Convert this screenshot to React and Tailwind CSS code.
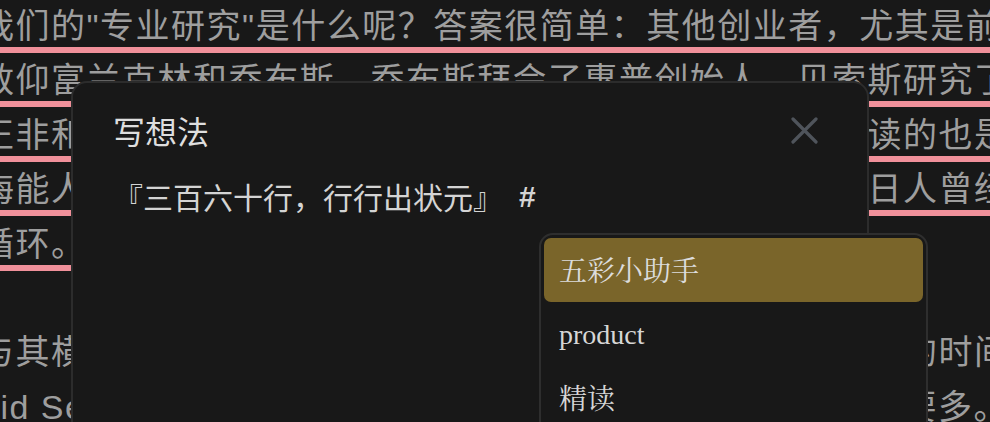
import React from "react";

const bgFont = { fontFamily: '"Liberation Sans", "Noto Sans CJK SC", sans-serif' };

function Line({ children, underline = true }) {
  return (
    <div className="h-[54.4px] pt-[6px] whitespace-nowrap">
      <span
        className={
          underline
            ? "inline-block align-top leading-[41px] border-b-[6px] border-[#f0909a]"
            : "inline-block align-top leading-[41px]"
        }
      >
        {children}
      </span>
    </div>
  );
}

export default function App() {
  return (
    <div className="relative w-[990px] h-[422px] overflow-hidden bg-[#181818]">
      <div
        className="-ml-[20px] w-[1100px] text-[34px] tracking-[1.5px] text-[#9e9e9e]"
        style={bgFont}
      >
        <Line>我们的"专业研究"是什么呢？答案很简单：其他创业者，尤其是前辈。</Line>
        <Line>敬仰富兰克林和乔布斯，乔布斯拜会了惠普创始人，贝索斯研究了任</Line>
        <Line>正非和雷军都曾多次公开表示，他们都反复研究、反复精读的也是前人。</Line>
        <Line>海能人异士的传记与访谈。这一代人学习上一代人，就像日人曾经学习。</Line>
        <Line>循环。</Line>
        <div className="h-[54.4px]" />
        <Line underline={false}>与其横向比较同行，不如纵向研究前辈：他们竟花了多少年的时间</Line>
        <div className="h-[54.4px] pt-[6px] whitespace-nowrap">
          <span className="inline-block align-top leading-[41px]">
            <span className="inline-block align-top w-[922.5px] overflow-hidden">
              aid Search 的广告投入，往往比我们想象中花在研究上的还
            </span>
            要多。
          </span>
        </div>
      </div>

      {/* Modal */}
      <div
        className="absolute left-[71px] top-[81px] w-[798px] h-[380px] rounded-[16px] border-2 border-[#2c2c2c] bg-[#181818] pl-[40px] pr-[49px] pt-[23px]"
        style={{ fontFamily: '"Noto Sans CJK SC", "Liberation Sans", sans-serif' }}
      >
        <div className="flex h-[48px] items-center justify-between">
          <div className="text-[32px] leading-[48px] text-[#dedede]">写想法</div>
          <svg width="27" height="27" viewBox="0 0 27 27" fill="none">
            <path d="M2 2 L25 25 M25 2 L2 25" stroke="#4f545b" strokeWidth="3.2" strokeLinecap="round" />
          </svg>
        </div>
        <div className="mt-[20px] flex items-center text-[30px] leading-[45px] text-[#d4d4d4] whitespace-nowrap">
          <span>『三百六十行，行行出状元』</span>
          <span className="ml-[16px] font-bold" style={{ fontFamily: '"Liberation Sans", sans-serif' }}>#</span>
        </div>
      </div>

      {/* Dropdown */}
      <div
        className="absolute left-[539px] top-[233px] w-[389px] h-[230px] rounded-[14px] border-2 border-[#2e2e2e] bg-[#181818] p-[3px] text-[28px] text-[#d6d6d6]"
        style={{ fontFamily: '"Liberation Serif", "Noto Serif CJK SC", "Noto Sans CJK SC", serif' }}
      >
        <div className="flex h-[64px] items-center rounded-[7px] bg-[#7a652a] pl-[15px] pt-[4px] text-[#dcdcdc]">
          五彩小助手
        </div>
        <div className="flex h-[64px] items-center pl-[15px] pt-[1px]">product</div>
        <div className="flex h-[64px] items-center pl-[15px] pt-[4px]">精读</div>
      </div>
    </div>
  );
}
